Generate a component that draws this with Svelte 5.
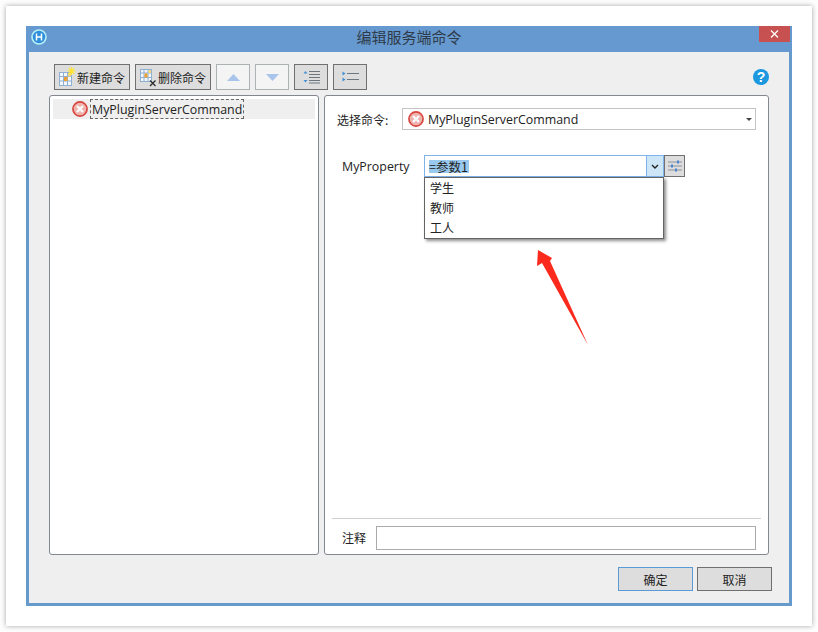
<script lang="ts">
  const options = ['学生', '教师', '工人'];
</script>

{#snippet errorIcon()}
  <svg class="err" width="16" height="16" viewBox="0 0 16 16">
    <circle cx="8" cy="8" r="7.1" fill="#efb3ae" stroke="#d8433c" stroke-width="1.6" />
    <path d="M5 5l6 6M11 5l-6 6" stroke="#fff" stroke-width="2.3" />
  </svg>
{/snippet}

<div class="sheet">
  <div class="window">
    <div class="titlebar">
      <svg class="logo" width="16" height="16" viewBox="0 0 16 16">
        <circle cx="8" cy="8" r="7" fill="#2f8fda" stroke="#b8f0f8" stroke-width="1.6" />
        <path d="M5.5 4.500v7M10.500 4.500v7M5.500 8h5" stroke="#fff" stroke-width="1.500" fill="none" />
      </svg>
      <span class="title">编辑服务端命令</span>
      <div class="close">
        <svg width="9" height="8" viewBox="0 0 9 8"><path d="M1 0.500l7 7M8 0.500l-7 7" stroke="#fff" stroke-width="1.300" /></svg>
      </div>
    </div>

    <div class="body">
      <div class="toolbar">
        <button class="tool text-tool">
          <svg width="17" height="20" viewBox="0 0 17 20">
            <rect x="0.500" y="5.500" width="12" height="13" fill="#f4f8fc" stroke="#8fb0d2" />
            <path d="M0.500 9.500h12M0.500 14h12M4.500 5.500v13M8.500 5.500v13" stroke="#8fb0d2" />
            <rect x="5" y="10" width="3.500" height="4" fill="#f0a030" />
            <rect x="9" y="6" width="3" height="3.500" fill="#f7d77a" />
            <path d="M12.500 0v8M8.500 4h8M9.700 1.200l5.600 5.600M15.300 1.200l-5.600 5.600" stroke="#ffe531" stroke-width="1.200" />
          </svg>
          <span>新建命令</span>
        </button>
        <button class="tool text-tool">
          <svg width="17" height="20" viewBox="0 0 17 20">
            <rect x="0.500" y="2.500" width="11" height="12" fill="#f4f8fc" stroke="#8fb0d2" />
            <path d="M0.500 6h11M0.500 10.500h11M4 2.500v12M8 2.500v12" stroke="#8fb0d2" />
            <rect x="4.500" y="6.500" width="3" height="4" fill="#f0a030" />
            <rect x="8.500" y="3" width="2.500" height="3" fill="#f7d77a" />
            <path d="M10 13.500l5.500 5.500M15.500 13.500L10 19" stroke="#2c2c2c" stroke-width="1.300" />
          </svg>
          <span>删除命令</span>
        </button>
        <button class="tool icon-tool off">
          <svg width="15" height="7" viewBox="0 0 15 7"><path d="M7.500 0L14 7H1z" fill="#a9c4ea" /></svg>
        </button>
        <button class="tool icon-tool off">
          <svg width="15" height="7" viewBox="0 0 15 7"><path d="M1 0h13L7.500 7z" fill="#a9c4ea" /></svg>
        </button>
        <button class="tool icon-tool">
          <svg width="17" height="14" viewBox="0 0 17 14">
            <path d="M6 1.500h11M6 4.500h11M6 7.500h11M6 10.500h11M6 13h11" stroke="#6d7780" />
            <path d="M2.500 1L4.500 3.500h-4zM2.500 12.500L0.500 10h4z" fill="#3f8fd6" />
          </svg>
        </button>
        <button class="tool icon-tool">
          <svg width="17" height="12" viewBox="0 0 17 12">
            <path d="M5 2.500h12M5 8.500h12" stroke="#6d7780" />
            <path d="M0.500 0.500l3 2-3 2zM0.500 6.500l3 2-3 2z" fill="#3f8fd6" />
          </svg>
        </button>
        <svg class="help" width="16" height="16" viewBox="0 0 16 16">
          <circle cx="8" cy="8" r="8" fill="#1b98e0" />
          <text x="8" y="13" text-anchor="middle" font-size="14" font-weight="700" font-family="Liberation Sans, sans-serif" fill="#fff">?</text>
        </svg>
      </div>

      <div class="panels">
        <div class="panel left">
          <div class="tree-row">
            {@render errorIcon()}
            <span class="tree-label">MyPluginServerCommand</span>
          </div>
        </div>

        <div class="panel right">
          <div class="select-row">
            <span class="select-label">选择命令:</span>
            <div class="select">
              {@render errorIcon()}
              <span class="select-value">MyPluginServerCommand</span>
              <span class="caret"></span>
            </div>
          </div>

          <div class="prop-row">
            <span class="prop-label">MyProperty</span>
            <div class="combo-wrap">
              <div class="combo">
                <span class="combo-value">=参数1</span>
                <span class="combo-btn">
                  <svg width="8" height="5" viewBox="0 0 8 5"><path d="M1 1l3 3 3-3" fill="none" stroke="#222" stroke-width="1.400" /></svg>
                </span>
              </div>
              <div class="dropdown">
                {#each options as opt}
                  <div class="option">{opt}</div>
                {/each}
              </div>
            </div>
            <button class="settings">
              <svg width="14" height="12" viewBox="0 0 14 12">
                <path d="M0 2h14M0 6h14M0 10h14" stroke="#8a9099" />
                <path d="M9 0.500h2v3H9zM3 4.500h2v3H3zM7 8.500h2v3H7z" fill="#4a86d0" />
              </svg>
            </button>
          </div>

          <div class="spacer"></div>

          <div class="note-row">
            <span class="note-label">注释</span>
            <div class="note-input"></div>
          </div>
        </div>
      </div>

      <div class="footer">
        <button class="action primary">确定</button>
        <button class="action">取消</button>
      </div>
    </div>

    <svg class="arrow" width="54" height="99" viewBox="0 0 54 99">
      <path d="M2 2L16 10 14 13 52 97 6 15 1 18z" fill="#fb2a1c" />
    </svg>
  </div>
</div>

<style>
  :global(body) {
    margin: 0;
    background: #fdfdfd;
  }

  .sheet {
    box-sizing: border-box;
    width: 806px;
    height: 620px;
    margin: 6px;
    padding: 20px;
    background: #fff;
    box-shadow: 0 0 5px rgba(0, 0, 0, 0.35);
    font-family: "Open Sans", "Noto Sans CJK SC", sans-serif;
    font-size: 12.4px;
    color: #222;
  }

  .window {
    position: relative;
    box-sizing: border-box;
    width: 766px;
    height: 580px;
    background: #efefef;
    border: 3px solid #6699cc;
    border-top: 0;
    display: flex;
    flex-direction: column;
  }

  .titlebar {
    position: relative;
    box-sizing: border-box;
    height: 26px;
    margin: 0 -3px;
    padding-bottom: 6px;
    background: #6699cf;
    display: flex;
    align-items: center;
    justify-content: center;
    flex-shrink: 0;
  }

  .logo {
    position: absolute;
    left: 5px;
    top: 3px;
  }

  .title {
    font-family: "Noto Sans CJK SC", sans-serif;
    font-size: 15px;
    color: #2f3b4a;
  }

  .close {
    position: absolute;
    right: 2px;
    top: 0;
    width: 31px;
    height: 16px;
    background: #c75050;
    display: flex;
    align-items: center;
    justify-content: center;
  }

  .body {
    flex: 1;
    display: flex;
    flex-direction: column;
    padding: 12px 20px 12px 20px;
    min-height: 0;
  }

  .toolbar {
    display: flex;
    align-items: center;
    gap: 5px;
    height: 26px;
    padding-left: 5px;
  }

  button {
    font: inherit;
    color: inherit;
    padding: 0;
  }

  .tool {
    box-sizing: border-box;
    height: 26px;
    background: #dddddd;
    border: 1px solid #707070;
    display: flex;
    align-items: center;
    justify-content: center;
  }

  .text-tool {
    width: 76px;
    gap: 1px;
    font-family: "Noto Sans CJK SC", sans-serif;
    font-size: 12px;
  }

  .icon-tool {
    width: 34px;
  }

  .off {
    background: #f4f4f4;
    border-color: #adb2b5;
  }

  .help {
    margin-left: auto;
  }

  .panels {
    flex: 1;
    display: flex;
    gap: 5px;
    margin-top: 5px;
    min-height: 0;
  }

  .panel {
    box-sizing: border-box;
    background: #fff;
    border: 1px solid #828790;
    border-radius: 3px;
  }

  .left {
    width: 270px;
    padding: 3px;
  }

  .tree-row {
    height: 20px;
    background: #efefef;
    display: flex;
    align-items: center;
    padding-left: 19px;
    gap: 2px;
  }

  .tree-label {
    box-sizing: border-box;
    border: 1px dashed #666;
    line-height: 20px;
    height: 20px;
    padding: 0 1px;
    white-space: nowrap;
  }

  .right {
    flex: 1;
    display: flex;
    flex-direction: column;
    padding: 12px 7px 4px 7px;
  }

  .select-row {
    display: flex;
    align-items: center;
    height: 22px;
    padding-left: 5px;
  }

  .select-label {
    width: 65px;
    font-family: "Noto Sans CJK SC", sans-serif;
    font-size: 12px;
    flex-shrink: 0;
  }

  .select {
    box-sizing: border-box;
    width: 354px;
    height: 22px;
    background: #fff;
    border: 1px solid #c4c4c4;
    display: flex;
    align-items: center;
    padding-left: 5px;
    gap: 4px;
    position: relative;
  }

  .caret {
    position: absolute;
    right: 3px;
    top: 9px;
    border: 3px solid transparent;
    border-top: 3px solid #444;
    border-bottom: 0;
  }

  .prop-row {
    display: flex;
    align-items: center;
    margin-top: 25px;
    padding-left: 10px;
    height: 22px;
  }

  .prop-label {
    width: 82px;
    flex-shrink: 0;
  }

  .combo-wrap {
    position: relative;
    width: 240px;
  }

  .combo {
    box-sizing: border-box;
    height: 22px;
    background: #fff;
    border: 1px solid #7eb4ea;
    display: flex;
    align-items: center;
    padding-left: 4px;
  }

  .combo-value {
    background: #99c9ef;
    font-family: "Noto Sans CJK SC", sans-serif;
    font-size: 12.5px;
    line-height: 13px;
    padding-right: 1px;
  }

  .combo-btn {
    margin-left: auto;
    width: 17px;
    height: 20px;
    box-sizing: border-box;
    background: #cde6f7;
    border-left: 1px solid #7eb4ea;
    display: flex;
    align-items: center;
    justify-content: center;
  }

  .dropdown {
    position: absolute;
    left: 0;
    top: 22px;
    box-sizing: border-box;
    width: 240px;
    height: 62px;
    padding: 1px 5px;
    background: #fff;
    border: 1px solid #646464;
    box-shadow: 2px 2px 3px rgba(0, 0, 0, 0.45);
    font-family: "Noto Sans CJK SC", sans-serif;
    font-size: 12px;
  }

  .option {
    height: 20px;
    line-height: 18px;
  }

  .settings {
    box-sizing: border-box;
    width: 21px;
    height: 22px;
    background: #dddddd;
    border: 1px solid #707070;
    display: flex;
    align-items: center;
    justify-content: center;
  }

  .spacer {
    flex: 1;
  }

  .note-row {
    display: flex;
    align-items: center;
    box-sizing: border-box;
    height: 32px;
    padding: 7px 0 0 10px;
    border-top: 1px solid #d0d0d0;
  }

  .note-label {
    width: 34px;
    flex-shrink: 0;
    padding-bottom: 2px;
    font-family: "Noto Sans CJK SC", sans-serif;
    font-size: 12px;
  }

  .note-input {
    box-sizing: border-box;
    width: 380px;
    height: 24px;
    background: #fff;
    border: 1px solid #ababab;
  }

  .footer {
    display: flex;
    justify-content: flex-end;
    gap: 4px;
    margin-top: 12px;
    margin-right: -3px;
  }

  .action {
    box-sizing: border-box;
    width: 75px;
    height: 24px;
    background: #dddddd;
    border: 1px solid #707070;
    font-family: "Noto Sans CJK SC", sans-serif;
    font-size: 12px;
  }

  .primary {
    border-color: #5b9bd5;
  }

  .arrow {
    position: absolute;
    left: 507px;
    top: 222px;
  }
</style>
